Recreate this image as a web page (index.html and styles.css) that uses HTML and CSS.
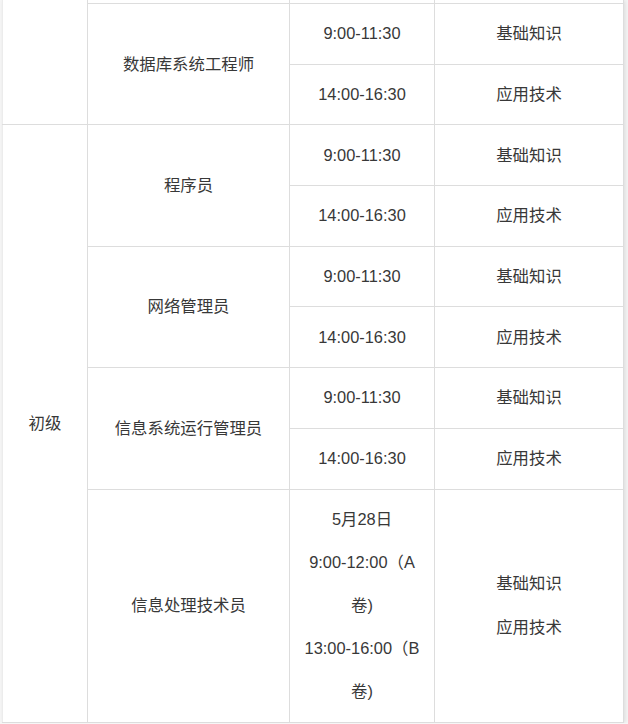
FILE: index.html
```html
<!DOCTYPE html>
<html lang="zh-CN">
<head>
<meta charset="utf-8">
<title>考试时间安排</title>
<link rel="stylesheet" href="styles.css">
</head>
<body>
<div class="frame">
<table class="schedule">
<colgroup>
<col class="c-level">
<col class="c-name">
<col class="c-time">
<col class="c-subject">
</colgroup>
<tbody>
<tr class="cut">
<td class="level" rowspan="3"></td>
<td></td><td></td><td></td>
</tr>
<tr>
<td rowspan="2">数据库系统工程师</td>
<td>9:00-11:30</td>
<td>基础知识</td>
</tr>
<tr>
<td>14:00-16:30</td>
<td>应用技术</td>
</tr>
<tr>
<td class="level" rowspan="9">初级</td>
<td rowspan="2">程序员</td>
<td>9:00-11:30</td>
<td>基础知识</td>
</tr>
<tr>
<td>14:00-16:30</td>
<td>应用技术</td>
</tr>
<tr>
<td rowspan="2">网络管理员</td>
<td>9:00-11:30</td>
<td>基础知识</td>
</tr>
<tr>
<td>14:00-16:30</td>
<td>应用技术</td>
</tr>
<tr>
<td rowspan="2">信息系统运行管理员</td>
<td>9:00-11:30</td>
<td>基础知识</td>
</tr>
<tr>
<td>14:00-16:30</td>
<td>应用技术</td>
</tr>
<tr>
<td>信息处理技术员</td>
<td>5月28日<br>9:00-12:00（A卷)<br>13:00-16:00（B卷)</td>
<td>基础知识<br>应用技术</td>
</tr>
</tbody>
</table>
</div>
</body>
</html>
```
FILE: styles.css
```css
html, body {
  margin: 0;
  padding: 0;
  background: #f6f6f6;
}

body {
  font-family: "Liberation Sans", "Noto Sans CJK SC", sans-serif;
  font-size: 16.4px;
  color: #383838;
}

.frame {
  margin-left: 2px;
  width: 621px;
  background: #fff;
  box-shadow: 2px 0 5px rgba(0, 0, 0, 0.12);
}

.schedule {
  border-collapse: collapse;
  table-layout: fixed;
  width: 621px;
}

.c-level { width: 85px; }
.c-name { width: 202px; }
.c-time { width: 145px; }
.c-subject { width: 189px; }

.schedule td {
  border: 1px solid #dddddd;
  padding: 8.3px 10px;
  line-height: 43.1px;
  text-align: center;
  vertical-align: middle;
}

.schedule td.level {
  border-left-color: #ececec;
}

.schedule tr.cut td {
  padding: 0;
  height: 3px;
  line-height: 3px;
  border-top: none;
}
```
